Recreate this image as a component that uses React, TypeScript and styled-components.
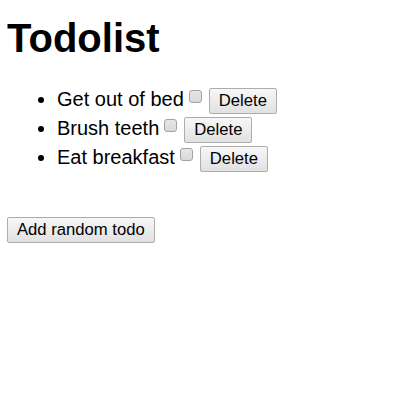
import React, { useState } from 'react';
import styled, { createGlobalStyle } from 'styled-components';

const GlobalStyle = createGlobalStyle`
  body {
    margin: 0;
    background: #fff;
    color: #000;
    font-family: "Liberation Sans", Arial, sans-serif;
  }
`;

const Page = styled.div`
  padding: 15px 0 0 7px;
`;

const Title = styled.h1`
  margin: 0;
  font-size: 40px;
  line-height: 46px;
  font-weight: bold;
`;

const List = styled.ul`
  margin: 24px 0 0;
  padding-left: 50px;
  font-size: 20px;
  list-style: disc;
`;

const Item = styled.li`
  line-height: 28.5px;
  white-space: nowrap;
`;

const Check = styled.input`
  appearance: none;
  display: inline-block;
  width: 13px;
  height: 13px;
  margin: 0 7px 3px 5px;
  box-sizing: border-box;
  border: 1px solid #a3a3a3;
  border-radius: 3px;
  background: linear-gradient(#e6e6e6, #d9d9d9);
  vertical-align: baseline;

  &:checked {
    background: linear-gradient(#cfe3f7, #b9d4ee);
    border-color: #6d9bc9;
  }
`;

const Button = styled.button`
  display: inline-block;
  height: 26px;
  box-sizing: border-box;
  padding: 0 9px;
  margin: 0;
  border: 1px solid #adadad;
  border-radius: 2px;
  background: linear-gradient(#f7f7f7, #e1e1e1);
  color: #000;
  font-family: "Liberation Sans", Arial, sans-serif;
  font-size: 16.67px;
  line-height: 24px;
  cursor: pointer;
`;

const Footer = styled.div`
  margin-top: 45px;
`;

const AddButton = styled(Button)`
  display: block;
`;

type Todo = { id: number; text: string; done: boolean };

const randomTodos = ['Walk the dog', 'Read a book', 'Do the dishes', 'Call mom', 'Water plants'];

export default function App() {
  const [todos, setTodos] = useState<Todo[]>([
    { id: 1, text: 'Get out of bed', done: false },
    { id: 2, text: 'Brush teeth', done: false },
    { id: 3, text: 'Eat breakfast', done: false },
  ]);

  const toggle = (id: number) =>
    setTodos(todos.map((t) => (t.id === id ? { ...t, done: !t.done } : t)));

  const remove = (id: number) => setTodos(todos.filter((t) => t.id !== id));

  const addRandom = () => {
    const text = randomTodos[Math.floor(Math.random() * randomTodos.length)];
    setTodos([...todos, { id: Date.now(), text, done: false }]);
  };

  return (
    <Page>
      <GlobalStyle />
      <Title>Todolist</Title>
      <List>
        {todos.map((todo) => (
          <Item key={todo.id}>
            {todo.text}
            <Check type="checkbox" checked={todo.done} onChange={() => toggle(todo.id)} />
            <Button onClick={() => remove(todo.id)}>Delete</Button>
          </Item>
        ))}
      </List>
      <Footer>
        <AddButton onClick={addRandom}>Add random todo</AddButton>
      </Footer>
    </Page>
  );
}
